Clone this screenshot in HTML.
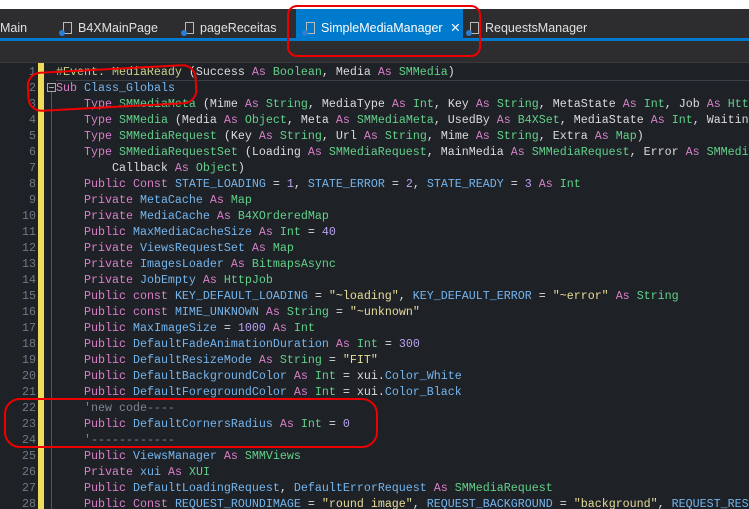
<!DOCTYPE html>
<html><head><meta charset="utf-8"><style>
*{margin:0;padding:0;box-sizing:border-box}
html,body{width:749px;height:509px;overflow:hidden}
body{background:#1e2126;font-family:"Liberation Sans",sans-serif;position:relative}
.wrap{position:absolute;left:0;top:0;width:749px;height:509px;overflow:hidden}
.top{position:absolute;left:0;top:0;width:749px;height:9px;background:#fff}
.tabs{position:absolute;left:0;top:9px;width:749px;height:29px;background:#2d2d30;color:#e0e0e0;font-size:12.5px;overflow:hidden}
.tab{position:absolute;top:0;height:29px;line-height:29px;padding-top:5px;white-space:nowrap}
.ic{display:inline-block;width:9px;height:12px;border:1px solid #bbb;vertical-align:-2px;margin-right:6px;position:relative}
.ic:after{content:"";position:absolute;left:-5px;bottom:-3px;width:6px;height:6px;border-radius:50%;background:#2a7fd4}
.active{background:#007acc;color:#fff}
.blue{position:absolute;left:0;top:38px;width:749px;height:3px;background:#007acc}
.tool{position:absolute;left:0;top:41px;width:749px;height:22px;background:#2d2d30;border-bottom:1px solid #3a3a3d}
.ln{position:absolute;left:0;width:36px;text-align:right;color:#6e7a8a;font:11.67px/16px "Liberation Mono",monospace}
.yb{position:absolute;left:38px;top:63px;width:6px;height:446px;background:#eedc5a}
.codebox{position:absolute;left:56px;top:64px;width:693px;height:445px;overflow:hidden}
.code{white-space:pre;font:11.67px/16px "Liberation Mono",monospace;color:#dcdcdc}
.k{color:#d97fc8}.i{color:#74b5ee}.t{color:#62d08a}.s{color:#e8dc9a}.n{color:#b9a3f0}.c{color:#7b8491}.e{color:#c8d28a}
.red{position:absolute;border:2px solid #e00;border-radius:10px}
</style></head><body><div class="wrap">
<div class="top"></div>
<div class="tabs">
<div class="tab" style="left:0">Main</div>
<div class="tab" style="left:63px"><span class="ic"></span>B4XMainPage</div>
<div class="tab" style="left:185px"><span class="ic"></span>pageReceitas</div>
<div class="tab active" style="left:296px;width:167px;padding-left:10px"><span class="ic"></span>SimpleMediaManager <span style="margin-left:4px">✕</span></div>
<div class="tab" style="left:470px"><span class="ic"></span>RequestsManager</div>
</div>
<div class="blue"></div>
<div class="tool"></div>
<div class="yb"></div>
<div style="position:absolute;left:47px;top:83px;width:9px;height:9px;border:1px solid #aaa"></div>
<div style="position:absolute;left:49px;top:87px;width:5px;height:1px;background:#aaa"></div>
<div style="position:absolute;left:51px;top:92px;width:1px;height:417px;background:#555"></div>
<div style="position:absolute;left:56px;top:80px;width:693px;height:1px;background:#3a3f47"></div>
<div class="ln" style="top:64px">1<br>2<br>3<br>4<br>5<br>6<br>7<br>8<br>9<br>10<br>11<br>12<br>13<br>14<br>15<br>16<br>17<br>18<br>19<br>20<br>21<br>22<br>23<br>24<br>25<br>26<br>27<br>28</div>
<div class="codebox"><div class="code"><span class="e">#Event: MediaReady</span> (Success <span class="k">As</span> <span class="t">Boolean</span>, Media <span class="k">As</span> <span class="t">SMMedia</span>)
<span class="k">Sub</span> <span class="i">Class_Globals</span>
    <span class="k">Type</span> <span class="t">SMMediaMeta</span> (Mime <span class="k">As</span> <span class="t">String</span>, MediaType <span class="k">As</span> <span class="t">Int</span>, Key <span class="k">As</span> <span class="t">String</span>, MetaState <span class="k">As</span> <span class="t">Int</span>, Job <span class="k">As</span> <span class="t">HttpJob</span>)
    <span class="k">Type</span> <span class="t">SMMedia</span> (Media <span class="k">As</span> <span class="t">Object</span>, Meta <span class="k">As</span> <span class="t">SMMediaMeta</span>, UsedBy <span class="k">As</span> <span class="t">B4XSet</span>, MediaState <span class="k">As</span> <span class="t">Int</span>, WaitingViews)
    <span class="k">Type</span> <span class="t">SMMediaRequest</span> (Key <span class="k">As</span> <span class="t">String</span>, Url <span class="k">As</span> <span class="t">String</span>, Mime <span class="k">As</span> <span class="t">String</span>, Extra <span class="k">As</span> <span class="t">Map</span>)
    <span class="k">Type</span> <span class="t">SMMediaRequestSet</span> (Loading <span class="k">As</span> <span class="t">SMMediaRequest</span>, MainMedia <span class="k">As</span> <span class="t">SMMediaRequest</span>, Error <span class="k">As</span> <span class="t">SMMediaRequest</span>
        Callback <span class="k">As</span> <span class="t">Object</span>)
    <span class="k">Public Const</span> <span class="i">STATE_LOADING</span> = <span class="n">1</span>, <span class="i">STATE_ERROR</span> = <span class="n">2</span>, <span class="i">STATE_READY</span> = <span class="n">3</span> <span class="k">As</span> <span class="t">Int</span>
    <span class="k">Private</span> <span class="i">MetaCache</span> <span class="k">As</span> <span class="t">Map</span>
    <span class="k">Private</span> <span class="i">MediaCache</span> <span class="k">As</span> <span class="t">B4XOrderedMap</span>
    <span class="k">Public</span> <span class="i">MaxMediaCacheSize</span> <span class="k">As</span> <span class="t">Int</span> = <span class="n">40</span>
    <span class="k">Private</span> <span class="i">ViewsRequestSet</span> <span class="k">As</span> <span class="t">Map</span>
    <span class="k">Private</span> <span class="i">ImagesLoader</span> <span class="k">As</span> <span class="t">BitmapsAsync</span>
    <span class="k">Private</span> <span class="i">JobEmpty</span> <span class="k">As</span> <span class="t">HttpJob</span>
    <span class="k">Public const</span> <span class="i">KEY_DEFAULT_LOADING</span> = <span class="s">"~loading"</span>, <span class="i">KEY_DEFAULT_ERROR</span> = <span class="s">"~error"</span> <span class="k">As</span> <span class="t">String</span>
    <span class="k">Public const</span> <span class="i">MIME_UNKNOWN</span> <span class="k">As</span> <span class="t">String</span> = <span class="s">"~unknown"</span>
    <span class="k">Public</span> <span class="i">MaxImageSize</span> = <span class="n">1000</span> <span class="k">As</span> <span class="t">Int</span>
    <span class="k">Public</span> <span class="i">DefaultFadeAnimationDuration</span> <span class="k">As</span> <span class="t">Int</span> = <span class="n">300</span>
    <span class="k">Public</span> <span class="i">DefaultResizeMode</span> <span class="k">As</span> <span class="t">String</span> = <span class="s">"FIT"</span>
    <span class="k">Public</span> <span class="i">DefaultBackgroundColor</span> <span class="k">As</span> <span class="t">Int</span> = xui.<span class="i">Color_White</span>
    <span class="k">Public</span> <span class="i">DefaultForegroundColor</span> <span class="k">As</span> <span class="t">Int</span> = xui.<span class="i">Color_Black</span>
    <span class="c">'new code----</span>
    <span class="k">Public</span> <span class="i">DefaultCornersRadius</span> <span class="k">As</span> <span class="t">Int</span> = <span class="n">0</span>
    <span class="c">'------------</span>
    <span class="k">Public</span> <span class="i">ViewsManager</span> <span class="k">As</span> <span class="t">SMMViews</span>
    <span class="k">Private</span> <span class="i">xui</span> <span class="k">As</span> <span class="t">XUI</span>
    <span class="k">Public</span> <span class="i">DefaultLoadingRequest</span>, <span class="i">DefaultErrorRequest</span> <span class="k">As</span> <span class="t">SMMediaRequest</span>
    <span class="k">Public Const</span> <span class="i">REQUEST_ROUNDIMAGE</span> = <span class="s">"round image"</span>, <span class="i">REQUEST_BACKGROUND</span> = <span class="s">"background"</span>, <span class="i">REQUEST_RESIZE</span></div></div>
<div class="red" style="left:287px;top:5px;width:194px;height:52px"></div>
<div class="red" style="left:27px;top:68px;width:170px;height:40px;border-radius:14px;transform:rotate(-3deg)"></div>
<div class="red" style="left:4px;top:398px;width:374px;height:50px;border-radius:16px"></div>
</div></body></html>
